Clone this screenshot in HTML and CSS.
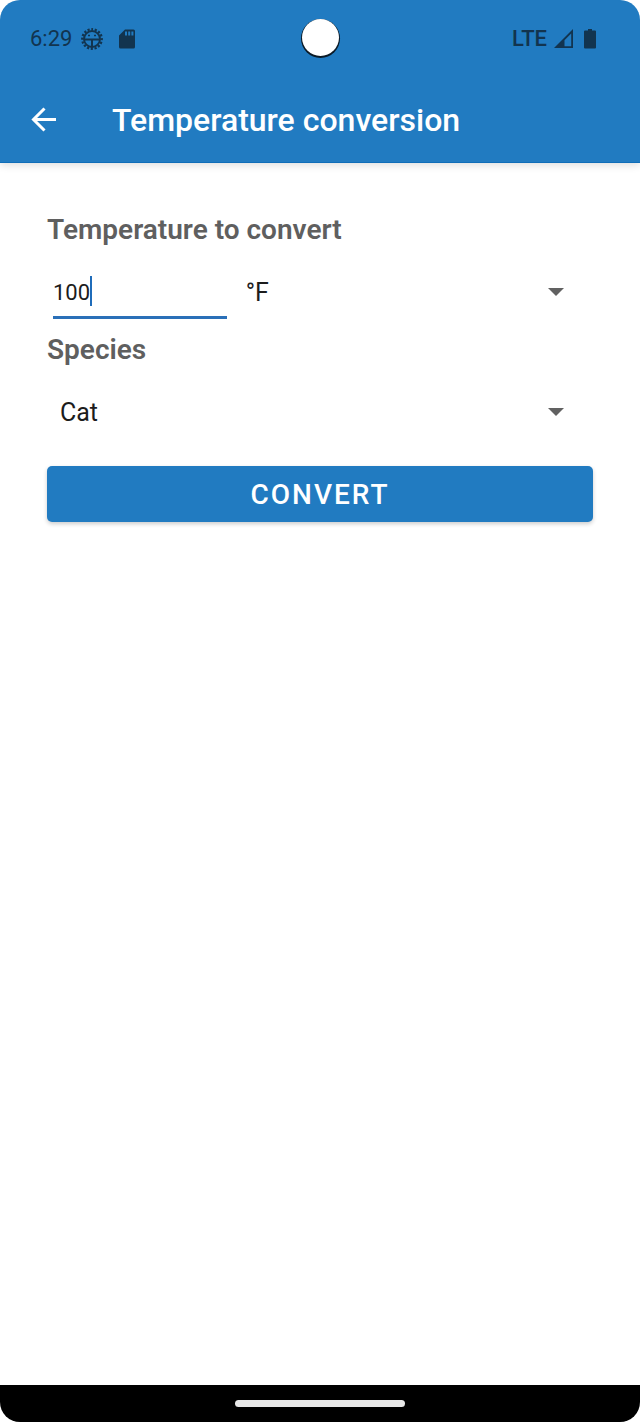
FILE: index.html
```
<!DOCTYPE html>
<html lang="en">

<head>
    <meta charset="UTF-8">
    <meta name="viewport" content="width=device-width, initial-scale=1">
    <title>Temperature conversion</title>
    <link rel="stylesheet" href="styles.css">
</head>

<body>
    <div class="phone">
        <header class="top">
            <div class="status-bar">
                <div class="status-left">
                    <span class="clock">6:29</span>
                    <svg class="icon-debug" width="22" height="22" viewBox="0 0 22 22" fill="none" stroke="currentColor">
                        <circle cx="11" cy="11" r="9.8" stroke-width="2.2" stroke-dasharray="2.2 1.648" stroke-dashoffset="1.1" transform="rotate(-90 11 11)" />
                        <circle cx="11" cy="11" r="8" stroke-width="2" />
                        <path d="M3 11.500h16M11 11.500v8" stroke-width="2" />
                        <path d="M7 7.500h2M13 7.500h2" stroke-width="1.4" />
                    </svg>
                    <svg class="icon-sd" width="16" height="20" viewBox="0 0 16 20" fill="currentColor" fill-rule="evenodd">
                        <path d="M6 0.5h8.500a1.500 1.500 0 0 1 1.500 1.500v16a1.500 1.500 0 0 1-1.500 1.500h-13a1.500 1.500 0 0 1-1.500-1.500v-11.500zM6 2.500v4h2v-4zM9.200 2.500v4h2v-4zM12.400 2.500v4h2v-4z" />
                    </svg>
                </div>
                <div class="status-right">
                    <span class="network">LTE</span>
                    <svg class="icon-signal" width="20" height="20" viewBox="0 0 20 20" fill="currentColor" fill-rule="evenodd">
                        <path d="M0 19L19 0v19zM10.500 17.200h6.700V4.600l-6.700 6.700z" />
                    </svg>
                    <svg class="icon-battery" width="12" height="20" viewBox="0 0 12 20" fill="currentColor">
                        <path d="M4 0h4v1.500h3a1 1 0 0 1 1 1v16a1 1 0 0 1-1 1h-10a1 1 0 0 1-1-1v-16a1 1 0 0 1 1-1h3z" />
                    </svg>
                </div>
                <span class="camera"></span>
            </div>
            <div class="app-bar">
                <a class="back" href="#" aria-label="Back">
                    <svg width="26" height="26" viewBox="0 0 26 26" fill="none" stroke="currentColor" stroke-width="3">
                        <path d="M25 12.500H3M13.500 1.500L2.500 12.500L13.500 23.500" />
                    </svg>
                </a>
                <h1>Temperature conversion</h1>
            </div>
        </header>

        <main>
            <form class="convert-form">
                <label class="heading" for="temperature">Temperature to convert</label>
                <div class="row row-temp">
                    <div class="temp-field">
                        <input type="text" id="temperature" name="temperature" value="100" inputmode="decimal">
                        <span class="caret"></span>
                    </div>
                    <div class="dropdown">
                        <select id="unit" name="unit" aria-label="Unit">
                            <option value="f">°F</option>
                            <option value="c">°C</option>
                        </select>
                    </div>
                </div>
                <label class="heading" for="species">Species</label>
                <div class="row">
                    <div class="dropdown">
                        <select id="species" name="species">
                            <option value="cat">Cat</option>
                            <option value="dog">Dog</option>
                        </select>
                    </div>
                </div>
                <button class="convert" type="button">CONVERT</button>
            </form>
        </main>

        <footer class="nav-bar">
            <span class="handle"></span>
        </footer>
    </div>
</body>

</html>
```

FILE: styles.css
```
* {
    box-sizing: border-box;
}

body {
    margin: 0;
    background-color: #fff;
    font-family: Roboto, "Liberation Sans", sans-serif;
    color: #1c1c1c;
}

.phone {
    display: flex;
    flex-direction: column;
    min-height: 100vh;
    border-radius: 20px;
    overflow: hidden;
}

.top {
    background-color: #217bc1;
    border-bottom: 1px solid #0f6db8;
    box-shadow: 0 2px 8px rgba(0, 0, 0, 0.14);
}

/* status bar */
.status-bar {
    position: relative;
    display: flex;
    justify-content: space-between;
    align-items: center;
    height: 77px;
    padding: 0 44px 0 30px;
    color: #12344f;
}

.status-left,
.status-right {
    display: flex;
    align-items: center;
}

.clock {
    font-size: 22px;
    margin-right: 9px;
}

.icon-debug {
    margin-right: 16px;
}

.network {
    font-size: 22px;
    font-weight: 500;
    margin-right: 7px;
}

.icon-signal {
    margin-right: 10px;
}

.camera {
    position: absolute;
    top: 19px;
    left: 50%;
    width: 37px;
    height: 37px;
    margin-left: -18px;
    border-radius: 50%;
    background-color: #fff;
    box-shadow: 0 1px 0 1px #0b1a26;
}

/* app bar */
.app-bar {
    display: flex;
    align-items: center;
    height: 85px;
    padding: 0 31px;
    color: #fff;
}

.back {
    display: flex;
    margin-right: 55px;
    color: #fff;
}

h1 {
    margin: 0;
    font-size: 32px;
    font-weight: 500;
}

/* form */
main {
    flex: 1;
    padding: 47px;
}

.convert-form {
    display: flex;
    flex-direction: column;
}

.heading {
    font-size: 28px;
    font-weight: 600;
    line-height: 40px;
    color: #5f5f5f;
}

.row {
    display: grid;
    height: 80px;
}

.row-temp {
    grid-template-columns: 34% 1fr;
}

.temp-field {
    position: relative;
    padding: 0 6px;
}

.temp-field input {
    width: 100%;
    height: 69px;
    padding: 18px 0 0;
    border: 0;
    border-bottom: 3px solid #2a70b8;
    border-radius: 0;
    outline: 0;
    background: none;
    font-family: inherit;
    font-size: 22px;
    color: inherit;
}

.caret {
    position: absolute;
    top: 26px;
    left: 43px;
    width: 2px;
    height: 30px;
    background-color: #1f6cba;
}

.dropdown {
    position: relative;
}

.dropdown select {
    width: 100%;
    height: 85px;
    padding: 0 48px 0 13px;
    border: 0;
    outline: 0;
    appearance: none;
    background: none;
    font-family: inherit;
    font-size: 25px;
    color: inherit;
}

.dropdown::after {
    content: "";
    position: absolute;
    top: 38px;
    right: 29px;
    border: 8px solid transparent;
    border-top-color: #616161;
    border-bottom: 0;
    pointer-events: none;
}

.convert {
    height: 56px;
    margin-top: 16px;
    border: 0;
    border-radius: 5px;
    background-color: #217bc1;
    box-shadow: 0 2px 4px rgba(0, 0, 0, 0.2);
    font-family: inherit;
    font-size: 28px;
    font-weight: 500;
    letter-spacing: 2px;
    color: #fff;
}

/* system navigation */
.nav-bar {
    display: flex;
    justify-content: center;
    align-items: center;
    height: 37px;
    background-color: #000;
}

.handle {
    width: 170px;
    height: 7px;
    border-radius: 4px;
    background-color: #e8e8e8;
}
```
